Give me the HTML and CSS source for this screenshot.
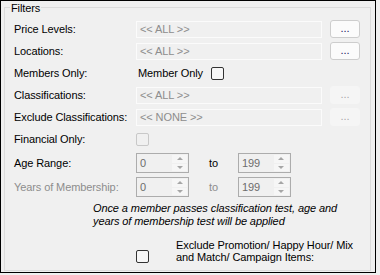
FILE: index.html
```html
<!DOCTYPE html>
<html lang="en">
<head>
    <meta charset="UTF-8">
    <title>Filters</title>
    <link rel="stylesheet" href="styles.css">
</head>
<body>
    <div class="frame">
        <div class="group">
            <span class="legend">Filters</span>
            <div class="rows">
                <div class="row">
                    <span class="lbl">Price Levels:</span>
                    <span class="tb">&lt;&lt; ALL &gt;&gt;</span>
                    <span class="btn">...</span>
                </div>
                <div class="row">
                    <span class="lbl">Locations:</span>
                    <span class="tb">&lt;&lt; ALL &gt;&gt;</span>
                    <span class="btn">...</span>
                </div>
                <div class="row">
                    <span class="lbl">Members Only:</span>
                    <span class="member-text">Member Only</span>
                    <span class="chk"></span>
                </div>
                <div class="row">
                    <span class="lbl">Classifications:</span>
                    <span class="tb">&lt;&lt; ALL &gt;&gt;</span>
                    <span class="btn disabled">...</span>
                </div>
                <div class="row">
                    <span class="lbl">Exclude Classifications:</span>
                    <span class="tb">&lt;&lt; NONE &gt;&gt;</span>
                    <span class="btn disabled">...</span>
                </div>
                <div class="row">
                    <span class="lbl">Financial Only:</span>
                    <span class="chk disabled"></span>
                </div>
                <div class="row tall first-tall">
                    <span class="lbl">Age Range:</span>
                    <span class="nud"><span class="val">0</span><span class="spin"><i class="up"></i><i class="down"></i></span></span>
                    <span class="to">to</span>
                    <span class="nud"><span class="val">199</span><span class="spin"><i class="up"></i><i class="down"></i></span></span>
                </div>
                <div class="row tall">
                    <span class="lbl muted">Years of Membership:</span>
                    <span class="nud"><span class="val">0</span><span class="spin"><i class="up"></i><i class="down"></i></span></span>
                    <span class="to muted">to</span>
                    <span class="nud"><span class="val">199</span><span class="spin"><i class="up"></i><i class="down"></i></span></span>
                </div>
            </div>
            <p class="note">Once a member passes classification test, age and<br>years of membership test will be applied</p>
            <div class="exclude">
                <span class="chk"></span>
                <span class="ex-text">Exclude Promotion/ Happy Hour/ Mix<br>and Match/ Campaign Items:</span>
            </div>
        </div>
    </div>
</body>
</html>
```

FILE: styles.css
```css
* {
    margin: 0;
    padding: 0;
    box-sizing: border-box;
}

body {
    background: #f0f0f0;
    font-family: 'Liberation Sans', Arial, sans-serif;
    font-size: 11px;
    letter-spacing: -0.1px;
    color: #000;
}

.frame {
    width: 376px;
    height: 273px;
    border: 1px solid #000;
    padding: 6px 4px 1px 3px;
}

.group {
    position: relative;
    height: 264px;
    border: 1px solid #dcdcdc;
    padding: 12px 0 0 9px;
}

.legend {
    position: absolute;
    top: -7px;
    left: 5px;
    padding: 0 1px;
    background: #f0f0f0;
    line-height: 14px;
}

.rows {
    display: flex;
    flex-direction: column;
    gap: 4px;
}

.row {
    display: flex;
    align-items: center;
    height: 18px;
}

.row.tall {
    height: 20px;
}

.row.first-tall {
    margin-top: 1px;
}

.lbl {
    width: 122px;
    flex: none;
}

.muted {
    color: #8d8d8d;
}

.tb {
    width: 186px;
    height: 17px;
    border: 1px solid #fbfbfb;
    color: #8d8d8d;
    padding-left: 3px;
    line-height: 15px;
}

.btn {
    width: 30px;
    height: 18px;
    margin-left: 8px;
    border: 1px solid #cdcdcd;
    border-radius: 3px;
    background: #fbfbfb;
    color: #1a1a60;
    text-align: center;
    line-height: 14px;
}

.btn.disabled {
    border-color: #f5f5f5;
    background: #f5f5f5;
    color: #a8a8a8;
}

.member-text {
    padding-left: 2px;
}

.chk {
    width: 13px;
    height: 13px;
    flex: none;
    border: 1px solid #333;
    border-radius: 2px;
    background: #f7f7f7;
}

.member-text + .chk {
    margin-left: 8px;
}

.chk.disabled {
    border-color: #c8c8c8;
    background: #f0f0f0;
}

.nud {
    display: flex;
    width: 53px;
    height: 20px;
    border: 1px solid #acacac;
    padding: 1px;
}

.nud .val {
    flex: 1;
    color: #6d6d6d;
    padding-left: 2px;
    line-height: 16px;
}

.spin {
    display: flex;
    flex-direction: column;
    gap: 1px;
    width: 15px;
}

.spin i {
    flex: 1;
    display: flex;
    align-items: center;
    justify-content: center;
    background: #f6f6f6;
}

.spin i::after {
    content: "";
    border-left: 3px solid transparent;
    border-right: 3px solid transparent;
}

.spin .up::after {
    border-bottom: 3px solid #a6a6a6;
}

.spin .down::after {
    border-top: 3px solid #a6a6a6;
}

.to {
    margin: 0 20px;
}

.note {
    margin: 5px 0 0 79px;
    font-style: italic;
    line-height: 13px;
}

.exclude {
    display: flex;
    margin-top: 11px;
}

.exclude .chk {
    margin: 11px 0 0 122px;
}

.ex-text {
    margin-left: 27px;
    line-height: 12px;
}
```
